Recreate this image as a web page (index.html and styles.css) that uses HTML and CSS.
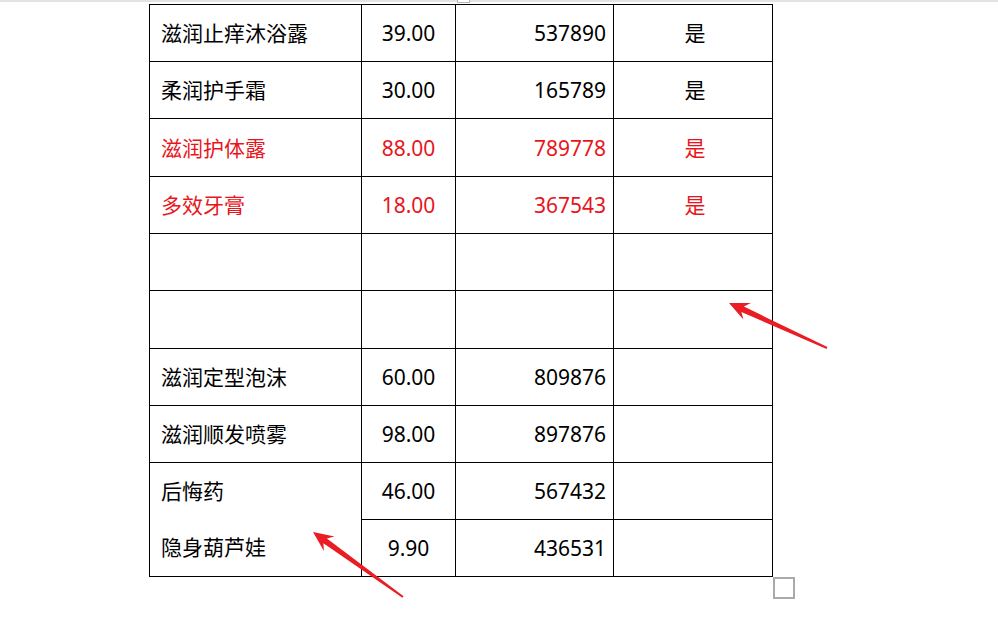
FILE: index.html
```html
<!DOCTYPE html>
<html lang="zh-CN">
<head>
<meta charset="utf-8">
<title>表格</title>
<link rel="stylesheet" href="styles.css">
</head>
<body>
<div class="page">
  <div class="topbar"></div>
  <div class="move-handle"></div>
  <div class="doc">
    <table class="grid">
      <colgroup>
        <col class="c1"><col class="c2"><col class="c3"><col class="c4">
      </colgroup>
      <tbody>
        <tr><td class="name">滋润止痒沐浴露</td><td class="price">39.00</td><td class="code">537890</td><td class="flag">是</td></tr>
        <tr><td class="name">柔润护手霜</td><td class="price">30.00</td><td class="code">165789</td><td class="flag">是</td></tr>
        <tr class="red tall"><td class="name">滋润护体露</td><td class="price">88.00</td><td class="code">789778</td><td class="flag">是</td></tr>
        <tr class="red"><td class="name">多效牙膏</td><td class="price">18.00</td><td class="code">367543</td><td class="flag">是</td></tr>
        <tr><td class="name"></td><td class="price"></td><td class="code"></td><td class="flag"></td></tr>
        <tr class="tall"><td class="name"></td><td class="price"></td><td class="code"></td><td class="flag"></td></tr>
        <tr><td class="name">滋润定型泡沫</td><td class="price">60.00</td><td class="code">809876</td><td class="flag"></td></tr>
        <tr><td class="name">滋润顺发喷雾</td><td class="price">98.00</td><td class="code">897876</td><td class="flag"></td></tr>
        <tr><td class="name merged" rowspan="2"><p class="para">后悔药</p><p class="para">隐身葫芦娃</p></td><td class="price">46.00</td><td class="code">567432</td><td class="flag"></td></tr>
        <tr><td class="price">9.90</td><td class="code">436531</td><td class="flag"></td></tr>
      </tbody>
    </table>
    <div class="resize-handle"></div>
  </div>
  <svg class="arrows" width="998" height="620" viewBox="0 0 998 620" aria-hidden="true">
    <polygon fill="#ea1c24" points="729,303 750.9,303.1 743.9,306.6 827.4,347.1 826.6,348.9 741.4,312 743.4,319.5"/>
    <polygon fill="#ea1c24" points="313,532 334.5,536.4 326.9,538.4 403.6,596.2 402.4,597.8 323.4,543.2 323.9,551"/>
  </svg>
</div>
</body>
</html>
```

FILE: styles.css
```css
html, body {
  margin: 0;
  padding: 0;
  background: #ffffff;
}

.page {
  position: relative;
  width: 998px;
  height: 620px;
  overflow: hidden;
  font-family: "Noto Sans", "Noto Sans CJK SC", sans-serif;
  color: #000000;
}

.topbar {
  height: 2px;
  background: #e3e3e3;
}

.move-handle {
  position: absolute;
  left: 457px;
  top: -10px;
  width: 11px;
  height: 11px;
  border: 1px solid #b5b5b5;
  background: #ffffff;
}

.doc {
  padding: 2px 0 0 149px;
}

.grid {
  border-collapse: collapse;
  table-layout: fixed;
  width: 623px;
  font-size: 21px;
}

.c1 { width: 212px; }
.c2 { width: 94px; }
.c3 { width: 158px; }
.c4 { width: 159px; }

.grid td {
  border: 1px solid #000000;
  height: 56px;
  padding: 0;
  vertical-align: middle;
  line-height: 28px;
  white-space: nowrap;
}

.grid tr.tall td { height: 57px; }

.name { padding-left: 11px !important; text-align: left; }
.price { text-align: center; }
.code { text-align: right; padding-right: 7px !important; }
.flag { text-align: center; padding-left: 4px !important; }

.red td { color: #e8161c; }

.merged { vertical-align: top !important; }

.para {
  margin: 0;
  height: 56px;
  display: flex;
  align-items: center;
}

.resize-handle {
  width: 18px;
  height: 18px;
  margin-left: 624px;
  border: 2px solid #aaaaaa;
}

.arrows {
  position: absolute;
  left: 0;
  top: 0;
  pointer-events: none;
}
```
